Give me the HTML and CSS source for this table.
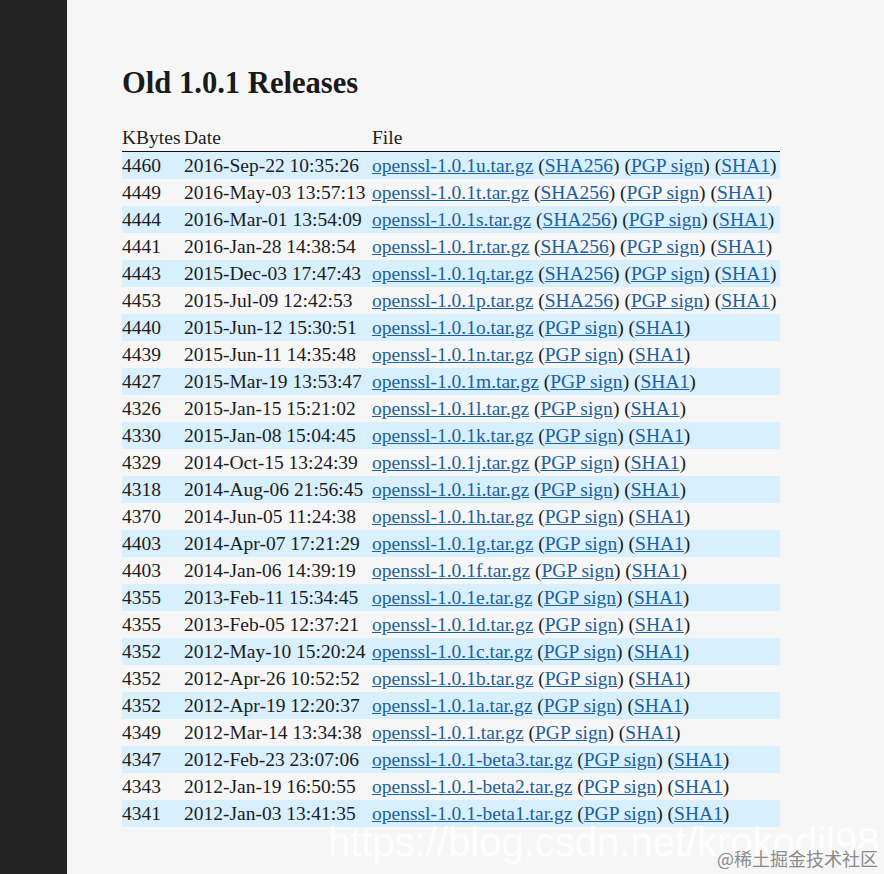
FILE: index.html
```html
<!DOCTYPE html>
<html lang="en">
<head>
  <meta charset="UTF-8" />
  <title>Old 1.0.1 Releases</title>
  <link rel="stylesheet" href="styles.css">
</head>
<body>

<div class="page">
  <div class="sidebar"></div>

  <div class="content">
    <h1>Old 1.0.1 Releases</h1>

    <table class="releases">
      <thead>
        <tr><th class="size">KBytes</th><th class="date">Date</th><th>File</th></tr>
      </thead>
      <tbody>
        <tr><td>4460</td><td>2016-Sep-22 10:35:26</td><td><a href="#">openssl-1.0.1u.tar.gz</a> (<a href="#">SHA256</a>) (<a href="#">PGP sign</a>) (<a href="#">SHA1</a>)</td></tr>
        <tr><td>4449</td><td>2016-May-03 13:57:13</td><td><a href="#">openssl-1.0.1t.tar.gz</a> (<a href="#">SHA256</a>) (<a href="#">PGP sign</a>) (<a href="#">SHA1</a>)</td></tr>
        <tr><td>4444</td><td>2016-Mar-01 13:54:09</td><td><a href="#">openssl-1.0.1s.tar.gz</a> (<a href="#">SHA256</a>) (<a href="#">PGP sign</a>) (<a href="#">SHA1</a>)</td></tr>
        <tr><td>4441</td><td>2016-Jan-28 14:38:54</td><td><a href="#">openssl-1.0.1r.tar.gz</a> (<a href="#">SHA256</a>) (<a href="#">PGP sign</a>) (<a href="#">SHA1</a>)</td></tr>
        <tr><td>4443</td><td>2015-Dec-03 17:47:43</td><td><a href="#">openssl-1.0.1q.tar.gz</a> (<a href="#">SHA256</a>) (<a href="#">PGP sign</a>) (<a href="#">SHA1</a>)</td></tr>
        <tr><td>4453</td><td>2015-Jul-09 12:42:53</td><td><a href="#">openssl-1.0.1p.tar.gz</a> (<a href="#">SHA256</a>) (<a href="#">PGP sign</a>) (<a href="#">SHA1</a>)</td></tr>
        <tr><td>4440</td><td>2015-Jun-12 15:30:51</td><td><a href="#">openssl-1.0.1o.tar.gz</a> (<a href="#">PGP sign</a>) (<a href="#">SHA1</a>)</td></tr>
        <tr><td>4439</td><td>2015-Jun-11 14:35:48</td><td><a href="#">openssl-1.0.1n.tar.gz</a> (<a href="#">PGP sign</a>) (<a href="#">SHA1</a>)</td></tr>
        <tr><td>4427</td><td>2015-Mar-19 13:53:47</td><td><a href="#">openssl-1.0.1m.tar.gz</a> (<a href="#">PGP sign</a>) (<a href="#">SHA1</a>)</td></tr>
        <tr><td>4326</td><td>2015-Jan-15 15:21:02</td><td><a href="#">openssl-1.0.1l.tar.gz</a> (<a href="#">PGP sign</a>) (<a href="#">SHA1</a>)</td></tr>
        <tr><td>4330</td><td>2015-Jan-08 15:04:45</td><td><a href="#">openssl-1.0.1k.tar.gz</a> (<a href="#">PGP sign</a>) (<a href="#">SHA1</a>)</td></tr>
        <tr><td>4329</td><td>2014-Oct-15 13:24:39</td><td><a href="#">openssl-1.0.1j.tar.gz</a> (<a href="#">PGP sign</a>) (<a href="#">SHA1</a>)</td></tr>
        <tr><td>4318</td><td>2014-Aug-06 21:56:45</td><td><a href="#">openssl-1.0.1i.tar.gz</a> (<a href="#">PGP sign</a>) (<a href="#">SHA1</a>)</td></tr>
        <tr><td>4370</td><td>2014-Jun-05 11:24:38</td><td><a href="#">openssl-1.0.1h.tar.gz</a> (<a href="#">PGP sign</a>) (<a href="#">SHA1</a>)</td></tr>
        <tr><td>4403</td><td>2014-Apr-07 17:21:29</td><td><a href="#">openssl-1.0.1g.tar.gz</a> (<a href="#">PGP sign</a>) (<a href="#">SHA1</a>)</td></tr>
        <tr><td>4403</td><td>2014-Jan-06 14:39:19</td><td><a href="#">openssl-1.0.1f.tar.gz</a> (<a href="#">PGP sign</a>) (<a href="#">SHA1</a>)</td></tr>
        <tr><td>4355</td><td>2013-Feb-11 15:34:45</td><td><a href="#">openssl-1.0.1e.tar.gz</a> (<a href="#">PGP sign</a>) (<a href="#">SHA1</a>)</td></tr>
        <tr><td>4355</td><td>2013-Feb-05 12:37:21</td><td><a href="#">openssl-1.0.1d.tar.gz</a> (<a href="#">PGP sign</a>) (<a href="#">SHA1</a>)</td></tr>
        <tr><td>4352</td><td>2012-May-10 15:20:24</td><td><a href="#">openssl-1.0.1c.tar.gz</a> (<a href="#">PGP sign</a>) (<a href="#">SHA1</a>)</td></tr>
        <tr><td>4352</td><td>2012-Apr-26 10:52:52</td><td><a href="#">openssl-1.0.1b.tar.gz</a> (<a href="#">PGP sign</a>) (<a href="#">SHA1</a>)</td></tr>
        <tr><td>4352</td><td>2012-Apr-19 12:20:37</td><td><a href="#">openssl-1.0.1a.tar.gz</a> (<a href="#">PGP sign</a>) (<a href="#">SHA1</a>)</td></tr>
        <tr><td>4349</td><td>2012-Mar-14 13:34:38</td><td><a href="#">openssl-1.0.1.tar.gz</a> (<a href="#">PGP sign</a>) (<a href="#">SHA1</a>)</td></tr>
        <tr><td>4347</td><td>2012-Feb-23 23:07:06</td><td><a href="#">openssl-1.0.1-beta3.tar.gz</a> (<a href="#">PGP sign</a>) (<a href="#">SHA1</a>)</td></tr>
        <tr><td>4343</td><td>2012-Jan-19 16:50:55</td><td><a href="#">openssl-1.0.1-beta2.tar.gz</a> (<a href="#">PGP sign</a>) (<a href="#">SHA1</a>)</td></tr>
        <tr><td>4341</td><td>2012-Jan-03 13:41:35</td><td><a href="#">openssl-1.0.1-beta1.tar.gz</a> (<a href="#">PGP sign</a>) (<a href="#">SHA1</a>)</td></tr>
      </tbody>
    </table>
  </div>
</div>

<!-- screenshot watermarks -->
<div class="watermark">https://blog.csdn.net/krokodil98</div>
<div class="credit">@稀土掘金技术社区</div>

</body>
</html>
```

FILE: styles.css
```css
* {
  box-sizing: border-box;
  margin: 0;
  padding: 0;
}

body {
  font-family: 'Liberation Serif', 'Times New Roman', serif;
  background: #f6f6f6;
  color: #1c1c1c;
  height: 874px;
  overflow: hidden;
}

.page {
  display: flex;
  min-height: 874px;
}

.sidebar {
  width: 67px;
  flex-shrink: 0;
  background: #232323;
}

.content {
  padding: 63px 0 0 55px;
}

h1 {
  font-size: 30.6px;
  font-weight: 700;
  line-height: 40px;
  color: #1a1a1a;
  margin-bottom: 21px;
}

.releases {
  border-collapse: collapse;
  font-size: 19.5px;
  line-height: 27px;
}

.releases th {
  text-align: left;
  font-weight: normal;
  padding: 0;
  border-bottom: 1px solid #111;
}

.releases th.size {
  width: 62px;
}

.releases th.date {
  width: 188px;
}

.releases td {
  padding: 0;
  white-space: nowrap;
}

.releases td:last-child {
  padding-right: 4px;
}

.releases tbody tr:nth-child(odd) {
  background: #d8effd;
}

.releases a {
  color: #1b609f;
  text-decoration: underline;
}

.watermark {
  position: absolute;
  left: 328px;
  top: 820px;
  font-family: 'Liberation Sans', Arial, sans-serif;
  font-size: 40px;
  color: rgba(255, 255, 255, 0.85);
  white-space: nowrap;
}

.credit {
  position: absolute;
  left: 717px;
  top: 845px;
  font-family: 'Noto Sans CJK SC', sans-serif;
  font-size: 18px;
  color: #8a8a8a;
  white-space: nowrap;
}
```
